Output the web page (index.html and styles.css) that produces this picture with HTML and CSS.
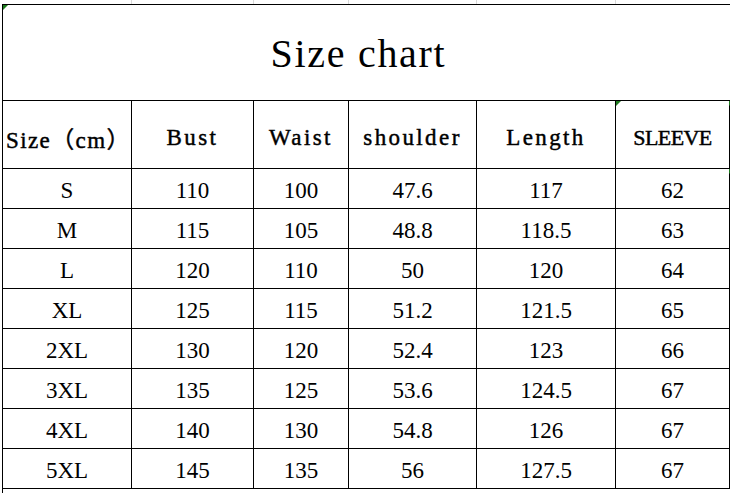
FILE: index.html
```html
<!DOCTYPE html>
<html>
<head>
<meta charset="utf-8">
<link rel="stylesheet" href="styles.css">
</head>
<body>
<div class="sheet">
  <div class="gridtop">
    <span class="g c1"></span><span class="g c2"></span><span class="g c3"></span><span class="g c4"></span><span class="g c5"></span><span class="g c6"></span>
  </div>
  <div class="chart">
    <div class="title">Size chart</div>
    <div class="hd first">Size（cm）</div>
    <div class="hd">Bust</div>
    <div class="hd">Waist</div>
    <div class="hd">shoulder</div>
    <div class="hd">Length</div>
    <div class="hd caps">SLEEVE</div>

    <div class="cd">S</div><div class="cd">110</div><div class="cd">100</div><div class="cd">47.6</div><div class="cd">117</div><div class="cd">62</div>
    <div class="cd">M</div><div class="cd">115</div><div class="cd">105</div><div class="cd">48.8</div><div class="cd">118.5</div><div class="cd">63</div>
    <div class="cd">L</div><div class="cd">120</div><div class="cd">110</div><div class="cd">50</div><div class="cd">120</div><div class="cd">64</div>
    <div class="cd">XL</div><div class="cd">125</div><div class="cd">115</div><div class="cd">51.2</div><div class="cd">121.5</div><div class="cd">65</div>
    <div class="cd">2XL</div><div class="cd">130</div><div class="cd">120</div><div class="cd">52.4</div><div class="cd">123</div><div class="cd">66</div>
    <div class="cd">3XL</div><div class="cd">135</div><div class="cd">125</div><div class="cd">53.6</div><div class="cd">124.5</div><div class="cd">67</div>
    <div class="cd">4XL</div><div class="cd">140</div><div class="cd">130</div><div class="cd">54.8</div><div class="cd">126</div><div class="cd">67</div>
    <div class="cd">5XL</div><div class="cd">145</div><div class="cd">135</div><div class="cd">56</div><div class="cd">127.5</div><div class="cd">67</div>

    <span class="mark m1"></span>
    <span class="mark m2"></span>
    <span class="mark m3"></span>
    <span class="mark m4"></span>
  </div>
  <div class="tail"></div>
</div>
</body>
</html>
```

FILE: styles.css
```css
html, body {
  margin: 0;
  padding: 0;
  background: #ffffff;
  width: 730px;
  height: 493px;
  overflow: hidden;
}

.sheet {
  width: 730px;
}

.gridtop {
  display: flex;
  height: 4px;
  padding-left: 3px;
}

.g {
  display: block;
  height: 4px;
  box-sizing: border-box;
  border-right: 1px solid #d9d9d9;
}
.c1 { width: 129px; }
.c2 { width: 122px; }
.c3 { width: 95px; }
.c4 { width: 128px; }
.c5 { width: 139px; }
.c6 { width: 114px; border-right: none; }

.chart {
  position: relative;
  margin-left: 2px;
  width: 728px;
  display: grid;
  grid-template-columns: 129px 122px 95px 128px 139px 114px;
  grid-template-rows: 96px 68px repeat(8, 40px);
  border-top: 1px solid #000;
  border-left: 1px solid #000;
}

.chart > div {
  box-sizing: content-box;
  border-right: 1px solid #000;
  border-bottom: 1px solid #000;
  display: flex;
  align-items: center;
  justify-content: center;
  white-space: nowrap;
  color: #000;
}

.chart > .title {
  grid-column: 1 / span 6;
  border-right: none;
  font-family: "Liberation Serif", serif;
  font-size: 40px;
  letter-spacing: 1.7px;
  padding-right: 16px;
  padding-top: 2px;
}

.hd {
  font-family: "Liberation Serif", "Noto Sans CJK SC", serif;
  font-size: 23px;
  letter-spacing: 2.4px;
  -webkit-text-stroke: 0.45px #000;
  padding-top: 6px;
}

.chart > .first {
  justify-content: flex-start;
  padding-left: 3px;
  letter-spacing: 1.4px;
}

.chart > .caps {
  font-size: 22px;
  letter-spacing: -0.6px;
}

.cd {
  font-family: "Liberation Serif", serif;
  font-size: 23px;
  padding-top: 5px;
}

.mark {
  position: absolute;
  width: 0;
  height: 0;
  border-top: 5px solid #1e7b1e;
  border-right: 5px solid transparent;
  z-index: 2;
}
.m1 { left: 0; top: 0; }
.m2 { left: 613px; top: 96px; }
.m3 { left: 726px; top: 96px; }
.m4 { left: 726px; top: 164px; }

.tail {
  margin-left: 2px;
  height: 5px;
  border-left: 1px solid #000;
}
```
